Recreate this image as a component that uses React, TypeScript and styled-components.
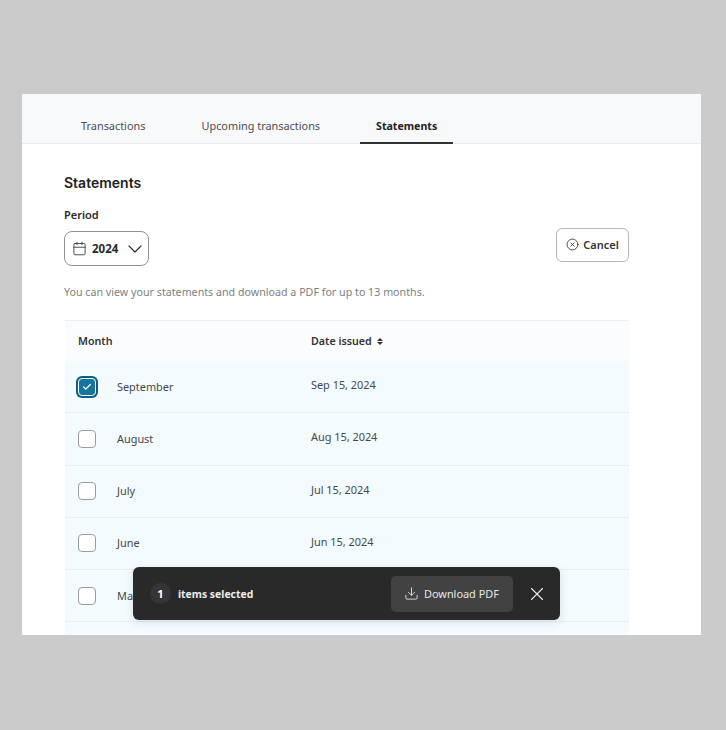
import React from "react";
import styled, { createGlobalStyle } from "styled-components";
import { ChevronDown, Calendar, CircleX, Check, Download, X } from "lucide-react";

const GlobalStyle = createGlobalStyle`
  html, body {
    margin: 0;
    padding: 0;
    background: #cbcbcb;
    font-family: "Noto Sans", "Open Sans", sans-serif;
    color: #2b2b2b;
  }
`;

const Page = styled.div`
  width: 726px;
  height: 730px;
  padding: 94px 25px 95px 22px;
  box-sizing: border-box;
`;

const Panel = styled.div`
  position: relative;
  height: 541px;
  overflow: hidden;
  background: #fff;
`;

const TabBar = styled.div`
  display: flex;
  gap: 24px;
  height: 50px;
  box-sizing: border-box;
  padding-left: 43px;
  background: #f8f9fb;
  border-bottom: 1px solid #e9ebee;
`;

const Tab = styled.div<{ $active?: boolean }>`
  display: flex;
  align-items: center;
  height: 50px;
  box-sizing: border-box;
  padding: ${(p) => (p.$active ? "15px" : "14px")} 16px 0;
  font-size: ${(p) => (p.$active ? "10.6px" : "10.9px")};
  font-weight: ${(p) => (p.$active ? 700 : 400)};
  color: ${(p) => (p.$active ? "#222" : "#4a4d50")};
  border-bottom: 2px solid ${(p) => (p.$active ? "#333" : "transparent")};
`;

const Content = styled.div`
  padding: 29px 72px 0 42px;
`;

const Heading = styled.h2`
  margin: 0;
  font-family: "Inter", sans-serif;
  font-size: 14px;
  line-height: 20px;
  font-weight: 600;
  color: #222;
`;

const PeriodRow = styled.div`
  display: flex;
  justify-content: space-between;
  align-items: flex-start;
  margin-top: 15px;
`;

const FieldLabel = styled.div`
  font-size: 11px;
  line-height: 14px;
  font-weight: 600;
  color: #2b2b2b;
`;

const Select = styled.div`
  display: flex;
  align-items: center;
  width: 85px;
  height: 35px;
  margin-top: 9px;
  padding-left: 7px;
  box-sizing: border-box;
  border: 1px solid #8f9397;
  border-radius: 8px;
  font-size: 11.5px;
  font-weight: 700;
  color: #2b2b2b;
  svg:first-child {
    margin-right: 5px;
  }
  svg:last-child {
    margin-left: 5px;
  }
`;

const CancelButton = styled.div`
  display: flex;
  align-items: center;
  justify-content: center;
  gap: 4px;
  width: 73px;
  height: 34px;
  margin-top: 20px;
  padding-bottom: 1px;
  box-sizing: border-box;
  border: 1px solid #b4b7ba;
  border-radius: 6px;
  font-size: 11px;
  font-weight: 600;
  color: #333;
`;

const Hint = styled.p`
  margin: 18px 0 0;
  font-size: 10.7px;
  line-height: 16px;
  color: #7d8083;
`;

const Table = styled.div`
  margin: 20px 0 0 1px;
  border-top: 1px solid #eceef0;
`;

const HeaderRow = styled.div`
  display: grid;
  grid-template-columns: 233px 1fr;
  align-items: center;
  height: 40px;
  box-sizing: border-box;
  padding-left: 13px;
  background: #fbfcfd;
  font-size: 10.7px;
  font-weight: 600;
  color: #333;
`;

const SortCell = styled.div`
  display: flex;
  align-items: center;
  gap: 5px;
`;

const SortArrows = styled.span`
  display: inline-flex;
  flex-direction: column;
  gap: 1px;
  &::before,
  &::after {
    content: "";
    display: block;
    border-left: 3px solid transparent;
    border-right: 3px solid transparent;
  }
  &::before {
    border-bottom: 3px solid #333;
  }
  &::after {
    border-top: 3px solid #333;
  }
`;

const Row = styled.div`
  display: grid;
  grid-template-columns: 233px 1fr;
  align-items: center;
  height: 52.25px;
  box-sizing: border-box;
  padding-left: 13px;
  background: #f3fbfe;
  border-bottom: 1px solid #e8eef1;
  font-size: 10.9px;
  color: #45484b;
`;

const MonthCell = styled.div`
  display: flex;
  align-items: center;
  gap: 21px;
`;

const MonthName = styled.span`
  margin-top: -1px;
`;

const DateCell = styled.div`
  margin-top: -4px;
`;

const Checkbox = styled.span<{ $checked?: boolean }>`
  display: flex;
  align-items: center;
  justify-content: center;
  width: 18px;
  height: 18px;
  flex: none;
  box-sizing: border-box;
  border-radius: 4px;
  background: ${(p) => (p.$checked ? "#14759f" : "#fff")};
  border: 1px solid ${(p) => (p.$checked ? "#fff" : "#9a9d9f")};
  box-shadow: ${(p) => (p.$checked ? "0 0 0 2px #0d5f85" : "none")};
`;

const Toast = styled.div`
  position: absolute;
  left: 111px;
  top: 473px;
  width: 427px;
  height: 53px;
  box-sizing: border-box;
  display: flex;
  align-items: center;
  padding-left: 17px;
  background: #292929;
  border-radius: 6px;
  box-shadow: 0 2px 8px rgba(40, 60, 80, 0.15);
  color: #fff;
`;

const CountBadge = styled.span`
  display: flex;
  align-items: center;
  justify-content: center;
  width: 21px;
  height: 21px;
  border-radius: 50%;
  background: #353535;
  font-size: 11px;
  font-weight: 700;
`;

const ToastLabel = styled.span`
  flex: 1;
  margin-left: 7px;
  font-size: 10.4px;
  font-weight: 700;
  color: #ececec;
`;

const DownloadButton = styled.div`
  display: flex;
  align-items: center;
  gap: 5px;
  width: 122px;
  height: 36px;
  box-sizing: border-box;
  padding-left: 13px;
  border-radius: 5px;
  background: #424242;
  font-size: 10.9px;
  color: #e8e8e8;
`;

const CloseButton = styled.span`
  display: flex;
  margin: 0 12px 0 13px;
  color: #e8e8e8;
`;

const rows = [
  { month: "September", date: "Sep 15, 2024", checked: true },
  { month: "August", date: "Aug 15, 2024" },
  { month: "July", date: "Jul 15, 2024" },
  { month: "June", date: "Jun 15, 2024" },
  { month: "May", date: "May 15, 2024" },
];

export default function App() {
  return (
    <>
      <GlobalStyle />
      <Page>
        <Panel>
          <TabBar>
            <Tab>Transactions</Tab>
            <Tab>Upcoming transactions</Tab>
            <Tab $active>Statements</Tab>
          </TabBar>
          <Content>
            <Heading>Statements</Heading>
            <PeriodRow>
              <div>
                <FieldLabel>Period</FieldLabel>
                <Select>
                  <Calendar size={15} strokeWidth={1.3} />
                  2024
                  <ChevronDown size={24} strokeWidth={1.1} />
                </Select>
              </div>
              <CancelButton>
                <CircleX size={13} strokeWidth={1.6} />
                Cancel
              </CancelButton>
            </PeriodRow>
            <Hint>You can view your statements and download a PDF for up to 13 months.</Hint>
            <Table>
              <HeaderRow>
                <div>Month</div>
                <SortCell>
                  Date issued
                  <SortArrows />
                </SortCell>
              </HeaderRow>
              {rows.map((row) => (
                <Row key={row.month}>
                  <MonthCell>
                    <Checkbox $checked={row.checked}>
                      {row.checked && <Check size={10} color="#fff" strokeWidth={3} />}
                    </Checkbox>
                    <MonthName>{row.month}</MonthName>
                  </MonthCell>
                  <DateCell>{row.date}</DateCell>
                </Row>
              ))}
              <Row />
            </Table>
          </Content>
          <Toast>
            <CountBadge>1</CountBadge>
            <ToastLabel>items selected</ToastLabel>
            <DownloadButton>
              <Download size={15} strokeWidth={1.4} />
              Download PDF
            </DownloadButton>
            <CloseButton>
              <X size={22} strokeWidth={1.2} />
            </CloseButton>
          </Toast>
        </Panel>
      </Page>
    </>
  );
}
